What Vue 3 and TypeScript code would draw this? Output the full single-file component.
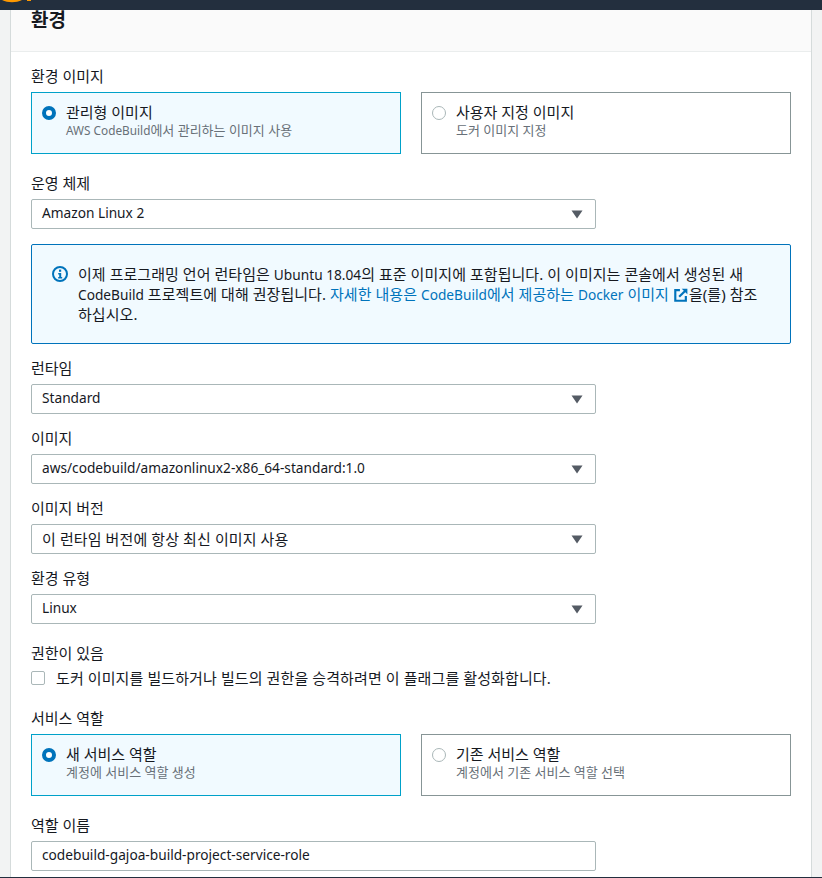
<script setup lang="ts">
interface Tile { title: string; pre?: string; desc: string; checked: boolean }
const imageTiles: Tile[] = [
  { title: '관리형 이미지', pre: 'AWS CodeBuild', desc: '에서 관리하는 이미지 사용', checked: true },
  { title: '사용자 지정 이미지', desc: '도커 이미지 지정', checked: false },
]
const roleTiles: Tile[] = [
  { title: '새 서비스 역할', desc: '계정에 서비스 역할 생성', checked: true },
  { title: '기존 서비스 역할', desc: '계정에서 기존 서비스 역할 선택', checked: false },
]
const selects = [
  { label: '런타임', value: 'Standard', ko: false },
  { label: '이미지', value: 'aws/codebuild/amazonlinux2-x86_64-standard:1.0', ko: false },
  { label: '이미지 버전', value: '이 런타임 버전에 항상 최신 이미지 사용', ko: true },
  { label: '환경 유형', value: 'Linux', ko: false },
]
</script>

<template>
  <div class="page">
    <header class="topbar">
      <svg class="logo" width="40" height="10" viewBox="0 0 40 10">
        <path d="M2 0 C 8 3, 16 3, 22 0 Z" fill="#f90" />
        <path d="M27 0H31V1H27Z" fill="#f90" />
      </svg>
    </header>
    <main class="shell">
      <section class="card">
        <div class="card-head"><h2>환경</h2></div>
        <div class="card-body">
          <div class="field">
            <div class="label">환경 이미지</div>
            <div class="tiles">
              <div v-for="t in imageTiles" :key="t.title" class="tile" :class="{ on: t.checked }">
                <span class="radio" :class="{ on: t.checked }"></span>
                <div>
                  <div class="tile-title">{{ t.title }}</div>
                  <div class="tile-desc"><span v-if="t.pre" class="en-sm">{{ t.pre }}</span>{{ t.desc }}</div>
                </div>
              </div>
            </div>
          </div>
          <div class="field wide">
            <div class="label">운영 체제</div>
            <div class="select">
              <span class="en">Amazon Linux 2</span>
              <svg class="caret" width="12" height="9" viewBox="0 0 12 9"><path d="M0.5 0.5H11.5L6 8.5Z" fill="#545b64" /></svg>
            </div>
          </div>
          <div class="alert">
            <svg class="info" width="16" height="16" viewBox="0 0 16 16">
              <circle cx="8" cy="8" r="7" fill="none" stroke="#0073bb" stroke-width="2" />
              <rect x="7" y="3.6" width="2.2" height="2.2" fill="#0073bb" />
              <path d="M6.2 7H9.2V11H10.2V12.4H6.2V11H7.2V8.4H6.2Z" fill="#0073bb" />
            </svg>
            <p>이제 프로그래밍 언어 런타임은 <span class="en">Ubuntu 18.04</span>의 표준 이미지에 포함됩니다. 이 이미지는 콘솔에서 생성된 새 <span class="en">CodeBuild</span> 프로젝트에 대해 권장됩니다. <a>자세한 내용은 <span class="en">CodeBuild</span>에서 제공하는 <span class="en">Docker</span> 이미지 <svg class="ext" width="14" height="14" viewBox="0 0 13 13"><path d="M5.5 2H1.2V11.8H11V7.5" fill="none" stroke="#0073bb" stroke-width="2" /><path d="M4.8 8.2L11 2" fill="none" stroke="#0073bb" stroke-width="2" /><path d="M7.2 0.6H12.4V5.8Z" fill="#0073bb" /></svg></a>을(를) 참조하십시오.</p>
          </div>
          <div v-for="s in selects" :key="s.label" class="field">
            <div class="label">{{ s.label }}</div>
            <div class="select">
              <span :class="s.ko ? 'ko' : 'en'">{{ s.value }}</span>
              <svg class="caret" width="12" height="9" viewBox="0 0 12 9"><path d="M0.5 0.5H11.5L6 8.5Z" fill="#545b64" /></svg>
            </div>
          </div>
          <div class="field wide">
            <div class="label">권한이 있음</div>
            <div class="check-row">
              <span class="checkbox"></span>
              <span class="ko check-text">도커 이미지를 빌드하거나 빌드의 권한을 승격하려면 이 플래그를 활성화합니다.</span>
            </div>
          </div>
          <div class="field wide">
            <div class="label">서비스 역할</div>
            <div class="tiles">
              <div v-for="t in roleTiles" :key="t.title" class="tile" :class="{ on: t.checked }">
                <span class="radio" :class="{ on: t.checked }"></span>
                <div>
                  <div class="tile-title">{{ t.title }}</div>
                  <div class="tile-desc">{{ t.desc }}</div>
                </div>
              </div>
            </div>
          </div>
          <div class="field wide">
            <div class="label">역할 이름</div>
            <div class="select"><span class="en">codebuild-gajoa-build-project-service-role</span></div>
          </div>
        </div>
      </section>
    </main>
    <div class="bottom"></div>
  </div>
</template>

<style scoped>
.page {
  width: 822px;
  height: 878px;
  overflow: hidden;
  background: #f2f3f3;
  display: flex;
  flex-direction: column;
  font-family: "Noto Sans", "Noto Sans CJK KR", sans-serif;
  font-size: 15px;
  color: #16191f;
}
.en { font-size: 13.7px; line-height: 1; letter-spacing: 0; }
.en-sm { font-size: 11.8px; line-height: 1; }
.ko { font-size: 15px; letter-spacing: 0.1px; }
.topbar { height: 10px; flex: none; background: #232f3e; overflow: hidden; }
.logo { display: block; }
.shell { flex: 1; min-height: 0; padding: 0 10px; overflow: hidden; }
.card { background: #fff; border-left: 1px solid #d5dbdb; border-right: 1px solid #d5dbdb; height: 100%; }
.card-head {
  height: 42px;
  box-sizing: border-box;
  background: #fafafa;
  border-bottom: 1px solid #eaeded;
  padding: 0 20px;
}
h2 { margin: 0; font-size: 19px; line-height: 20px; font-weight: 700; }
.card-body { padding: 0 20px; }
.field { margin-top: 13px; }
.field.wide { margin-top: 18px; }
.label { line-height: 22px; height: 22px; margin-bottom: 5px; }
.tiles { display: grid; grid-template-columns: 370px 370px; gap: 20px; }
.tile {
  height: 62px;
  box-sizing: border-box;
  border: 1px solid #879596;
  padding: 9px 10px;
  display: flex;
  gap: 10px;
  background: #fff;
}
.tile.on { border-color: #00a1c9; background: #f1faff; }
.tile-title { line-height: 20px; height: 20px; }
.tile-desc { font-size: 13px; line-height: 16px; height: 16px; color: #687078; }
.radio {
  width: 14px;
  height: 14px;
  flex: none;
  margin-top: 4px;
  border-radius: 50%;
  border: 1px solid #aab7b8;
  box-sizing: border-box;
  background: #fff;
}
.radio.on { border: 4px solid #0073bb; }
.select {
  width: 565px;
  height: 30px;
  box-sizing: border-box;
  border: 1px solid #aab7b8;
  border-radius: 2px;
  background: #fff;
  padding: 0 10px 2px;
  display: flex;
  align-items: center;
  justify-content: space-between;
}
.caret { flex: none; margin-right: 2px; margin-top: 2px; }
.alert {
  margin-top: 15px;
  height: 100px;
  box-sizing: border-box;
  border: 1px solid #0073bb;
  border-radius: 2px;
  background: #f1faff;
  padding: 19px 20px 0;
  display: flex;
  gap: 10px;
}
.info { flex: none; margin-top: 2px; }
.alert p { margin: 0; line-height: 20px; letter-spacing: 0.05px; }
.alert a { color: #0073bb; }
.ext { vertical-align: -2px; margin-left: 1px; margin-right: 1px; }
.check-row { display: flex; align-items: center; gap: 11px; margin-top: -2px; height: 22px; }
.check-text { margin-top: -2px; }
.checkbox {
  width: 14px;
  height: 14px;
  flex: none;
  box-sizing: border-box;
  border: 1px solid #aab7b8;
  border-radius: 2px;
  background: #fff;
}
.bottom { height: 1px; flex: none; background: #232f3e; }
</style>

<style>
html, body { margin: 0; background: #f2f3f3; }
</style>
